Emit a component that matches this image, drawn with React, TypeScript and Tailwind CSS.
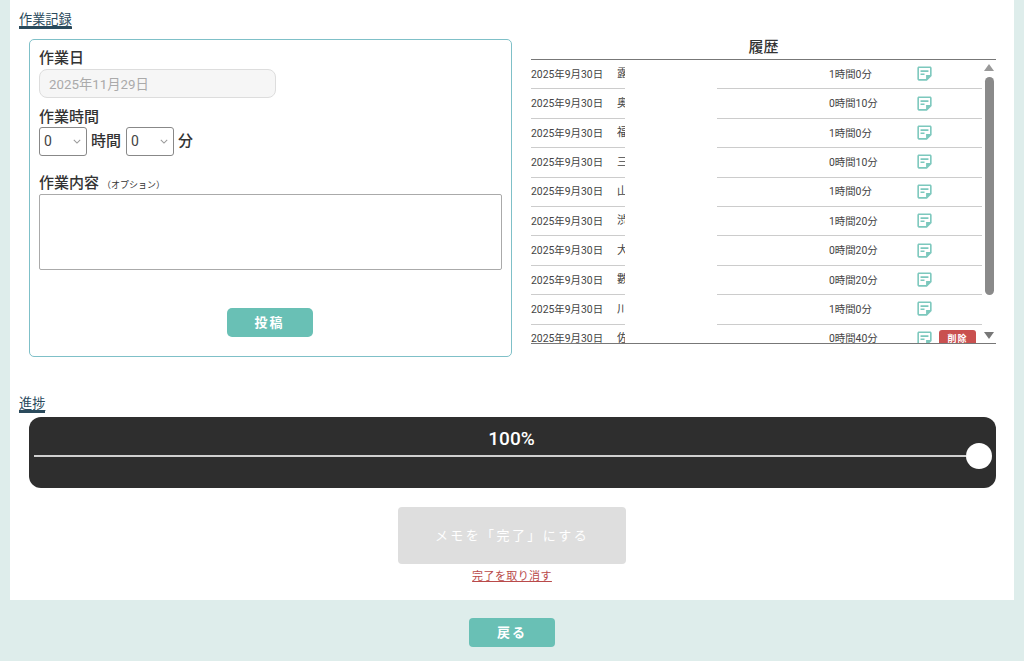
const rows: [string, string, boolean?][] = [
  ['露', '1時間0分'],
  ['奥', '0時間10分'],
  ['福', '1時間0分'],
  ['三', '0時間10分'],
  ['山', '1時間0分'],
  ['渋', '1時間20分'],
  ['大', '0時間20分'],
  ['數', '0時間20分'],
  ['川', '1時間0分'],
  ['佐', '0時間40分', true],
];

function NoteIcon() {
  return (
    <svg viewBox="0 0 24 24" className="w-[19px] h-[19px] fill-[#7cc8bd] shrink-0 mt-[-2px]">
      <path d="M19 5v9h-5v5H5V5h14m0-2H5C3.9 3 3 3.9 3 5v14c0 1.1.9 2 2 2h10l6-6V5c0-1.1-.9-2-2-2zm-7 11H7v-2h5v2zm5-4H7V8h10v2z" />
    </svg>
  );
}

function Row({ name, time, del }: { name: string; time: string; del?: boolean }) {
  return (
    <div className="flex h-[29.4px] shrink-0 text-[10.4px] text-[#444]">
      <div className="w-[94px] pt-[1px] flex items-center border-b border-[#ccc] overflow-hidden">
        <span className="w-[86px] shrink-0">2025年9月30日</span>
        <span className="w-[8px] overflow-hidden text-[11px] shrink-0 whitespace-nowrap">{name}</span>
      </div>
      <div className="w-[92px]" />
      <div className="flex-1 pt-[1px] flex items-center border-b border-[#ccc]">
        <span className="ml-[112px] w-[86px] shrink-0">{time}</span>
        <NoteIcon />
        {del && (
          <span className="ml-[5px] w-[37px] h-[20px] mt-[2px] flex items-center justify-center rounded-[3px] bg-[#c9504f] text-white text-[9px] font-bold tracking-[1px]">
            削除
          </span>
        )}
      </div>
    </div>
  );
}

function Heading({ children }: { children: string }) {
  return (
    <div className="inline-block text-[13.2px] leading-[15px] text-[#2a4a5c] border-b-2 border-[#2a4a5c] underline underline-offset-2 decoration-[#2a4a5c]">
      {children}
    </div>
  );
}

function Sel() {
  return (
    <div className="relative w-[48px] h-[29px]">
      <select className="appearance-none w-full h-full border border-[#888] rounded-[3px] pl-[4px] text-[14px] font-normal text-[#444] bg-white">
        <option>0</option>
      </select>
      <svg viewBox="0 0 10 6" className="absolute right-[6px] top-[12px] w-[8px] h-[5px] fill-none stroke-[#999] stroke-[1.3] pointer-events-none">
        <path d="M1 1l4 4 4-4" />
      </svg>
    </div>
  );
}

export default function App() {
  return (
    <div
      className="h-[661px] w-[1024px] overflow-hidden bg-[#deedeb] flex flex-col items-center text-[#333]"
      style={{ fontFamily: 'Roboto, "Noto Sans CJK JP", sans-serif' }}
    >
      <div className="w-[1004px] h-[600px] shrink-0 bg-white pl-[9px] pr-[18px] pt-[12px] flex flex-col">
        <div className="h-[17px] flex items-start"><Heading>作業記録</Heading></div>
        <div className="flex mt-[10px] ml-[10px] items-start">
          <div className="w-[483px] h-[318px] shrink-0 border border-[#7fc0c8] rounded-[5px] px-[9px] pt-[8px] flex flex-col items-start">
            <div className="text-[15px] font-medium leading-[20px]">作業日</div>
            <input
              disabled
              value="2025年11月29日"
              className="w-[237px] h-[29px] mt-[1px] border border-[#ddd] rounded-[8px] bg-[#f6f6f6] px-[9px] text-[13.3px] text-[#aaa]"
            />
            <div className="text-[15px] font-medium leading-[20px] mt-[9px]">作業時間</div>
            <div className="flex items-center text-[15px] font-medium">
              <Sel />
              <span className="ml-[4px] mr-[5px]">時間</span>
              <Sel />
              <span className="ml-[4px]">分</span>
            </div>
            <div className="flex items-baseline mt-[17px] leading-[20px]">
              <span className="text-[15px] font-medium">作業内容</span>
              <span className="ml-[3px] text-[9px]">（オプション）</span>
            </div>
            <textarea className="w-[463px] h-[76px] mt-[-1px] border border-[#aaa] rounded-[2px] shrink-0 resize-none" />
            <button className="self-center mr-[2px] mt-[38px] w-[86px] h-[29px] rounded-[5px] bg-[#69c0b5] text-white text-[13px] font-bold tracking-[2px]">
              投稿
            </button>
          </div>
          <div className="w-[465px] ml-[19px] shrink-0">
            <div className="h-[20px] mt-[1px] border-b border-[#777] text-center text-[15px] font-medium leading-[14px]">履歴</div>
            <div className="flex h-[284px] border-b border-[#777]">
              <div className="w-[451px] overflow-hidden flex flex-col">
                {rows.map((r, i) => (
                  <Row key={i} name={r[0]} time={r[1]} del={r[2]} />
                ))}
              </div>
              <div className="w-[14px] pl-[2px] pr-[2px] flex flex-col items-center">
                <div className="mt-[4px] w-0 h-0 border-l-[5px] border-r-[5px] border-b-[7px] border-l-transparent border-r-transparent border-b-[#999]" />
                <div className="mt-[6px] w-[9px] h-[218px] rounded-full bg-[#8a8a8a]" />
                <div className="mt-[37px] w-0 h-0 border-l-[5px] border-r-[5px] border-t-[7px] border-l-transparent border-r-transparent border-t-[#777]" />
              </div>
            </div>
          </div>
        </div>
        <div className="mt-[39px] h-[17px] flex items-start"><Heading>進捗</Heading></div>
        <div className="ml-[10px] mt-[4px] w-[967px] h-[71px] shrink-0 rounded-[12px] bg-[#2e2e2e] flex flex-col pl-[5px] pr-[4px]">
          <div className="mr-[3px] text-center text-white text-[19px] font-medium leading-[24px] mt-[10px]">100%</div>
          <div className="flex items-center mt-[-8px]">
            <div className="flex-1 h-[2px] bg-[#d0d0d0]" />
            <div className="w-[26px] h-[26px] rounded-full bg-white" />
          </div>
        </div>
        <div className="flex flex-col items-center mt-[19px] pl-[9px]">
          <button className="w-[228px] h-[57px] rounded-[4px] bg-[#dedede] text-white text-[13px] tracking-[2.4px]">
            メモを「完了」にする
          </button>
          <a className="mt-[5px] text-[11px] leading-[15px] text-[#b94a4a] underline tracking-[0.4px]">完了を取り消す</a>
        </div>
      </div>
      <button className="mt-[18px] w-[86px] h-[29px] shrink-0 rounded-[4px] bg-[#69c0b5] text-white text-[13px] font-bold tracking-[2px]">
        戻る
      </button>
    </div>
  );
}
